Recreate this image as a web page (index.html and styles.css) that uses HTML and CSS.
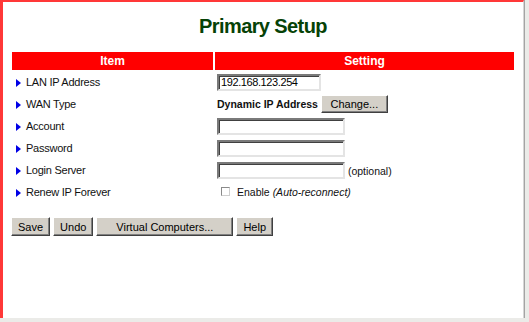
FILE: index.html
```html
<!DOCTYPE html>
<html lang="en">

<head>
    <meta charset="UTF-8">
    <meta name="viewport" content="width=device-width, initial-scale=1.0">
    <title>Primary Setup</title>
    <link rel="stylesheet" href="styles.css">
</head>

<body>
    <div class="frame">
        <h1>Primary Setup</h1>

        <table class="setup">
            <tr>
                <th class="col-item">Item</th>
                <th>Setting</th>
            </tr>
            <tr>
                <td class="label"><span class="bullet"></span>LAN IP Address</td>
                <td><input type="text" class="field field-ip" value="192.168.123.254"></td>
            </tr>
            <tr>
                <td class="label"><span class="bullet"></span>WAN Type</td>
                <td><span class="wan-type">Dynamic IP Address</span> <button class="btn btn-change">Change...</button></td>
            </tr>
            <tr>
                <td class="label"><span class="bullet"></span>Account</td>
                <td><input type="text" class="field"></td>
            </tr>
            <tr>
                <td class="label"><span class="bullet"></span>Password</td>
                <td><input type="password" class="field"></td>
            </tr>
            <tr>
                <td class="label"><span class="bullet"></span>Login Server</td>
                <td><input type="text" class="field"> <span class="note">(optional)</span></td>
            </tr>
            <tr>
                <td class="label"><span class="bullet"></span>Renew IP Forever</td>
                <td>
                    <label class="check">
                        <input type="checkbox" class="box">
                        <span class="note">Enable <em>(Auto-reconnect)</em></span>
                    </label>
                </td>
            </tr>
        </table>

        <div class="actions">
            <button class="btn">Save</button>
            <button class="btn">Undo</button>
            <button class="btn btn-wide">Virtual Computers...</button>
            <button class="btn">Help</button>
        </div>
    </div>
</body>

</html>
```

FILE: styles.css
```css
body {
    margin: 0;
    background-color: #ebebe8;
    font-family: "Liberation Sans", Arial, sans-serif;
}

.frame {
    width: 520px;
    height: 316px;
    background-color: #fff;
    border-top: 2px solid #ff3838;
    border-left: 3px solid #ff3838;
    border-right: 1px solid #d6d6d6;
    box-shadow: 1px 0 0 #a4a4a4, 0 1px 0 #d0d0d0;
}

h1 {
    margin: 0;
    padding-top: 12px;
    font-size: 20px;
    line-height: 24px;
    letter-spacing: -0.6px;
    color: #064206;
    text-align: center;
}

.setup {
    margin: 12px 0 0 7px;
    width: 506px;
    border-spacing: 2px;
}

.setup th {
    height: 18px;
    padding: 0;
    background-color: #ff0000;
    color: #fff;
    font-size: 12px;
    line-height: 18px;
}

.setup .col-item {
    width: 201px;
}

.setup td {
    height: 20px;
    padding: 0 0 0 2px;
    font-size: 10.5px;
    white-space: nowrap;
    color: #111;
}

.setup td.label {
    padding-left: 4px;
    font-size: 11px;
    letter-spacing: -0.25px;
}

.bullet {
    display: inline-block;
    width: 0;
    height: 0;
    margin-right: 5px;
    vertical-align: -1px;
    border-top: 4.5px solid transparent;
    border-bottom: 4.5px solid transparent;
    border-left: 5px solid #0000e6;
}

.field {
    box-sizing: border-box;
    width: 128px;
    height: 17px;
    margin: 0;
    padding: 0 2px;
    vertical-align: middle;
    font-family: "Liberation Sans", Arial, sans-serif;
    font-size: 11px;
    letter-spacing: -0.4px;
    border: 2px solid;
    border-color: #7a7a7a #e4e4e4 #e4e4e4 #7a7a7a;
    box-shadow: inset 1px 1px 0 #404040;
}

.field-ip {
    width: 104px;
}

.wan-type {
    font-weight: bold;
    font-size: 10.5px;
    vertical-align: middle;
}

.note {
    vertical-align: middle;
}

.check {
    display: inline-flex;
    align-items: center;
    gap: 7px;
    padding-left: 4px;
}

.box {
    appearance: none;
    box-sizing: border-box;
    width: 9px;
    height: 9px;
    margin: 0;
    background-color: #fff;
    border: 1px solid;
    border-color: #8a8a8a #cfcfcf #cfcfcf #8a8a8a;
}

.btn {
    height: 19px;
    margin: 0;
    padding: 0 6px;
    font-family: "Liberation Sans", Arial, sans-serif;
    font-size: 11px;
    color: #000;
    background-color: #d4d0c8;
    border: 1px solid;
    border-color: #fff #404040 #404040 #fff;
    box-shadow: inset -1px -1px 0 #808080;
    vertical-align: middle;
}

.btn-change {
    width: 67px;
    height: 18px;
}

.btn-wide {
    width: 137px;
}

.actions {
    display: flex;
    gap: 3px;
    margin: 13px 0 0 8px;
}
```
